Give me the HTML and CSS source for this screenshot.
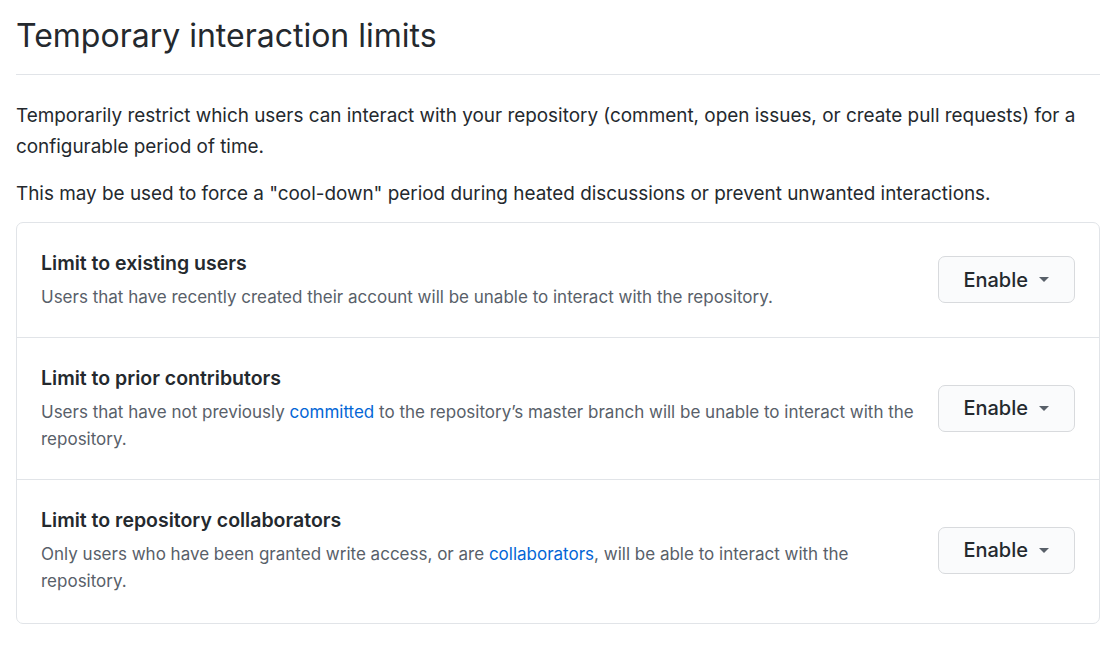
FILE: index.html
```html
<!DOCTYPE html>
<html lang="en">
<head>
<meta charset="utf-8">
<title>Temporary interaction limits</title>
<link rel="stylesheet" href="styles.css">
</head>
<body>
<main class="page">
  <h2 class="subhead">Temporary interaction limits</h2>
  <p class="lead">Temporarily restrict which users can interact with your repository (comment, open issues, or create pull requests) for a configurable period of time.</p>
  <p class="lead">This may be used to force a "cool-down" period during heated discussions or prevent unwanted interactions.</p>
  <div class="box">
    <div class="row">
      <div class="info">
        <h4 class="title">Limit to existing users</h4>
        <p class="desc">Users that have recently created their account will be unable to interact with the repository.</p>
      </div>
      <button class="btn" type="button">Enable <span class="caret"></span></button>
    </div>
    <div class="row">
      <div class="info">
        <h4 class="title">Limit to prior contributors</h4>
        <p class="desc">Users that have not previously <a href="#">committed</a> to the repository’s master branch will be unable to interact with the repository.</p>
      </div>
      <button class="btn" type="button">Enable <span class="caret"></span></button>
    </div>
    <div class="row">
      <div class="info">
        <h4 class="title">Limit to repository collaborators</h4>
        <p class="desc">Only users who have been granted write access, or are <a href="#">collaborators</a>, will be able to interact with the repository.</p>
      </div>
      <button class="btn" type="button">Enable <span class="caret"></span></button>
    </div>
  </div>
</main>
</body>
</html>
```

FILE: styles.css
```css
html, body {
  margin: 0;
  padding: 0;
  background: #ffffff;
}

body {
  font-family: Inter, "Noto Sans", "Liberation Sans", sans-serif;
  color: #24292e;
}

.page {
  padding: 0 17px 0 16px;
}

.subhead {
  margin: 0;
  padding: 15px 0 17px;
  font-size: 32px;
  font-weight: 400;
  line-height: 42px;
  border-bottom: 1px solid #e1e4e8;
}

.lead {
  margin: 0;
  font-size: 18.9px;
  line-height: 31px;
}

.subhead + .lead {
  margin-top: 25px;
}

.lead + .lead {
  margin-top: 16px;
}

.box {
  margin-top: 13px;
  border: 1px solid #e1e4e8;
  border-radius: 7px;
}

.row {
  display: flex;
  align-items: center;
  gap: 16px;
  padding: 25px 24px 26px 24px;
  border-top: 1px solid #e1e4e8;
}

.row:first-child {
  border-top: 0;
}

.row:last-child {
  padding-bottom: 28px;
}

.info {
  flex: 1;
}

.title {
  margin: 0;
  font-size: 19.5px;
  font-weight: 600;
  line-height: 30px;
}

.desc {
  margin: 6px 0 0;
  font-size: 17px;
  line-height: 27px;
  color: #586069;
}

.desc a {
  color: #0366d6;
  text-decoration: none;
}

.btn {
  flex: none;
  display: inline-flex;
  align-items: center;
  gap: 11px;
  height: 47px;
  padding: 0 25px 0 24px;
  font-family: inherit;
  font-size: 20px;
  font-weight: 500;
  color: #24292e;
  background: #fafbfc;
  border: 1px solid #d8dadd;
  border-radius: 7px;
}

.caret {
  width: 0;
  height: 0;
  border-left: 5.5px solid transparent;
  border-right: 5.5px solid transparent;
  border-top: 5.5px solid #586069;
}
```
